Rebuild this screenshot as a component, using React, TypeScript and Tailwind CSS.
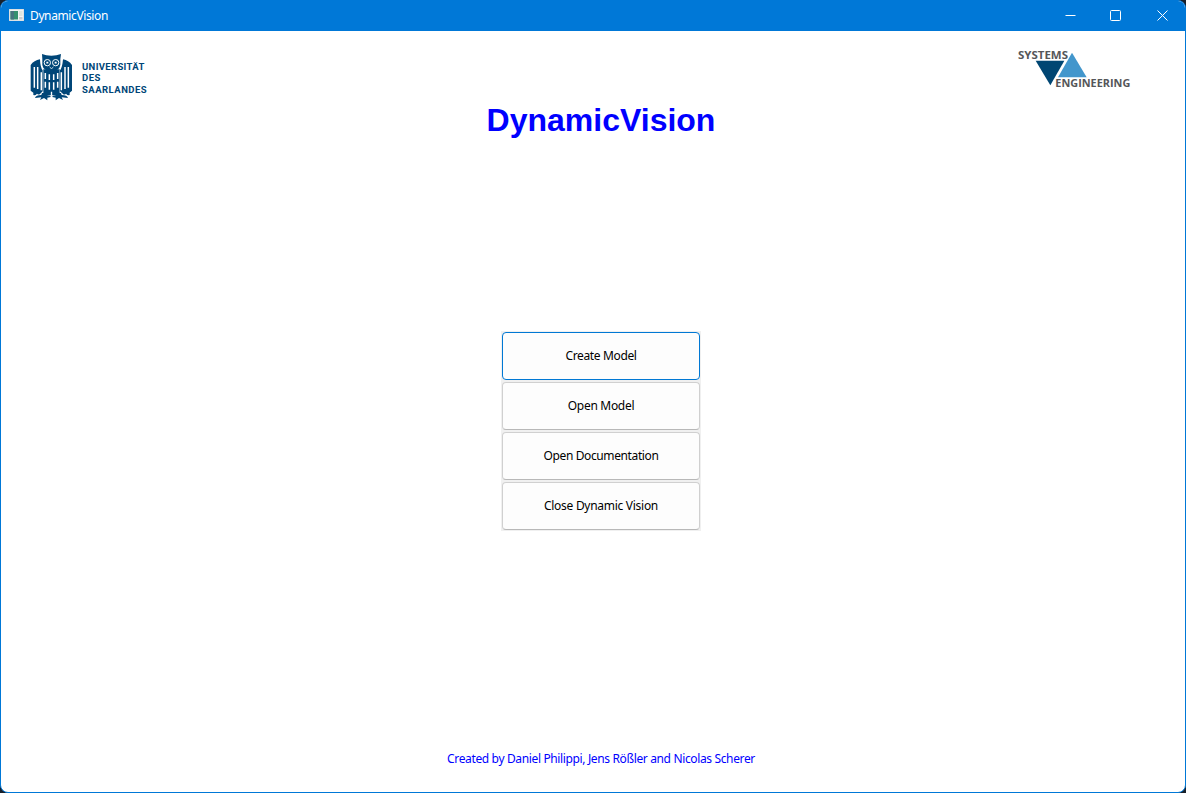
import React from "react";

const actions = [
  { label: "Create Model", tracking: "tracking-[-0.36px]", focused: true },
  { label: "Open Model", tracking: "tracking-[-0.3px]", focused: false },
  { label: "Open Documentation", tracking: "tracking-[-0.38px]", focused: false },
  { label: "Close Dynamic Vision", tracking: "tracking-[-0.28px]", focused: false },
];

const windowControls = [
  { name: "Minimize", d: "M0.5 5.5H10.5", inset: "pl-px" },
  { name: "Maximize", d: "M1.5 0.5H9.5Q10.5 0.5 10.5 1.5V9.5Q10.5 10.5 9.5 10.5H1.5Q0.5 10.5 0.5 9.5V1.5Q0.5 0.5 1.5 0.5Z", inset: "pr-px" },
  { name: "Close", d: "M0.5 0.5L10.5 10.5M10.5 0.5L0.5 10.5", inset: "pl-px" },
];

function WindowIcon() {
  return (
    <svg className="mb-0.5 h-3 w-[15px]" viewBox="0 0 15 12">
      <rect x="0" y="0" width="15" height="12" fill="#c9ced2" />
      <rect x="0.5" y="0.5" width="14" height="11" fill="#f2f3f4" />
      <rect x="1.5" y="2" width="7.5" height="8.5" fill="#35906f" />
      <path d="M1.5 2h3.5v8.5H1.5z" fill="#47747f" />
      <rect x="10" y="2" width="3.5" height="5" fill="#dfe5df" />
      <rect x="10" y="8" width="3.5" height="2.5" fill="#c9cccf" />
    </svg>
  );
}

function UniversityLogo() {
  return (
    <svg className="h-16 w-[140px]" viewBox="0 0 420 192" fill="#004678">
      <path d="M66 27Q78 32 94 32Q110 32 123 27L121 42V60Q118 78 94 79Q70 78 67 60V42Z" />
      <path d="M60 43Q42 46 32 60V137L40 143V150Q46 152 51 146Q58 152 62 145L68 139V76Q61 68 60 43Z" />
      <path d="M129 43Q146 46 156 60V137L149 143V150Q143 152 138 146Q131 152 127 145L120 139V76Q127 68 129 43Z" />
      <path d="M70 73H119V144L112 151H76L70 144Z" />
      <path d="M66 144H86L82 151Q92 151 92 156L82 158V166L72 159L60 165L64 157L45 159Q47 150 64 150Z" />
      <path d="M123 144H103L107 151Q97 151 97 156L107 158V166L117 159L129 165L125 157L144 159Q142 150 125 150Z" />
      <g fill="none" stroke="#fff" strokeWidth="3">
        <circle cx="82" cy="53" r="9.5" />
        <circle cx="107" cy="53" r="9.5" />
        <path d="M79 53h6M104 53h6" strokeWidth="5" />
        <path d="M89 65L94.5 72L100 65" strokeWidth="2" />
        <path d="M43 66V128M53 66V132M145 66V128M135 66V132" strokeWidth="4.5" />
        <path d="M64 82V136M124 82V136" strokeWidth="4.5" />
        <path d="M76 84V102M88 88V105M101 88V105M113 84V102M76 110V128M88 112V134M101 112V134M113 110V128" strokeWidth="4.5" />
        <path d="M94.5 140V152" strokeWidth="4" />
      </g>
      <g className="font-['Roboto',sans-serif] text-[28.5px] font-bold">
        <text x="186" y="74" textLength="187">UNIVERSITÄT</text>
        <text x="186" y="108" textLength="55">DES</text>
        <text x="186" y="143" textLength="194">SAARLANDES</text>
      </g>
    </svg>
  );
}

function EngineeringLogo() {
  return (
    <svg className="h-14 w-[130px]" viewBox="0 0 390 168">
      <path d="M77 56H163L121 130Z" fill="#004673" />
      <path d="M186 32L230 106H144Z" fill="#4296cc" />
      <g fill="#555659" className="font-['Open_Sans',sans-serif] text-[33px] font-bold">
        <text x="24" y="50" textLength="150" lengthAdjust="spacingAndGlyphs">SYSTEMS</text>
        <text x="136" y="136" textLength="225" lengthAdjust="spacingAndGlyphs">ENGINEERING</text>
      </g>
    </svg>
  );
}

export default function App() {
  return (
    <div className="h-[793px] w-[1186px] bg-[#18202a] font-['Noto_Sans',sans-serif]">
      <div className="flex h-full flex-col overflow-hidden rounded-lg border border-[#0078d7] bg-white">
        <header className="flex h-[30px] shrink-0 items-center bg-[#0078d7] pl-2 text-white">
          <WindowIcon />
          <span className="ml-1.5 text-xs tracking-[-0.38px]">DynamicVision</span>
          <div className="ml-auto flex h-full items-center">
            {windowControls.map((c) => (
              <button key={c.name} aria-label={c.name} className={`flex h-full w-[46px] items-center justify-center pb-px ${c.inset}`}>
                <svg className="h-[11px] w-[11px] shrink-0" viewBox="0 0 11 11" fill="none" stroke="#fff">
                  <path d={c.d} />
                </svg>
              </button>
            ))}
          </div>
        </header>
        <main className="flex flex-1 flex-col items-center">
          <div className="flex h-[58px] w-full justify-between pr-[45px] pl-[19px] pt-[11px]">
            <div className="pt-[3px]"><UniversityLogo /></div>
            <EngineeringLogo />
          </div>
          <h1 className="ml-4 mt-3 font-['Liberation_Sans',sans-serif] text-[32px] leading-[38px] font-bold text-[#0000ff]">DynamicVision</h1>
          <div className="ml-4 mt-[192px] flex w-[200px] flex-col gap-0.5 bg-[#f0f0f0] p-px">
            {actions.map((a) => (
              <button
                key={a.label}
                className={`h-12 w-[198px] rounded border bg-[#fdfdfd] text-xs text-black ${a.tracking} ${a.focused ? "border-[#0078d4]" : "border-[#d0d0d0] border-b-[#b8b8b8]"}`}
              >
                {a.label}
              </button>
            ))}
          </div>
          <p className="mt-auto mb-[24px] ml-4 text-xs leading-[18px] tracking-[-0.36px] text-[#0000ff]">
            Created by Daniel Philippi, Jens Rößler and Nicolas Scherer
          </p>
        </main>
      </div>
    </div>
  );
}
